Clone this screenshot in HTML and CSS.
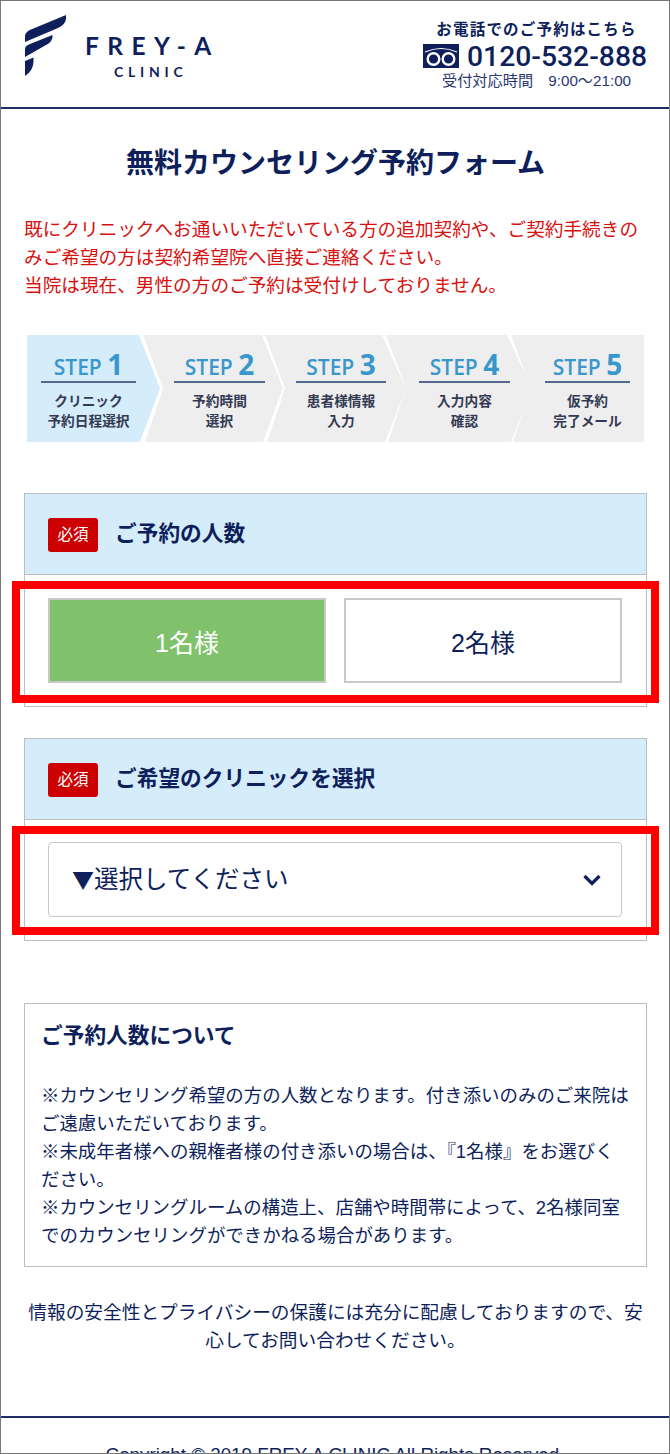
FILE: index.html
```html
<!DOCTYPE html>
<html lang="ja">
<head>
    <meta charset="UTF-8">
    <meta name="viewport" content="width=device-width, initial-scale=1.0">
    <title>無料カウンセリング予約フォーム</title>
    <link rel="stylesheet" href="styles.css">
</head>
<body>
    <div class="page">
        <header class="site-header">
            <div class="logo">
                <svg class="logo-mark" width="42" height="62" viewBox="25 15 42 62">
                    <path d="M25 42 L25 36 Q25 32 31 29.500 L66 15 L66 19 Q65 25 58 28 Z" fill="#0e1f5b"/>
                    <path d="M25 57 L25 49 Q25 46 30 44 L52.500 35 L52.500 37 Q52 42 46 45 Z" fill="#0e1f5b"/>
                    <path d="M25 61 L33.500 57.500 L33.500 62 Q33 71 25 76 Z" fill="#0e1f5b"/>
                </svg>
                <div class="logo-text">
                    <div class="logo-name">FREY-A</div>
                    <div class="logo-sub">CLINIC</div>
                </div>
            </div>
            <div class="tel">
                <div class="tel-lead">お電話でのご予約はこちら</div>
                <div class="tel-number">
                    <svg width="36" height="24" viewBox="0 0 36 24">
                        <rect width="36" height="24" fill="#0e1f5b"/>
                        <path d="M2 8 Q18 1 34 8" fill="none" stroke="#fff" stroke-width="1.200"/>
                        <circle cx="10.500" cy="15" r="5.800" fill="none" stroke="#fff" stroke-width="2.400"/>
                        <circle cx="25.500" cy="15" r="5.800" fill="none" stroke="#fff" stroke-width="2.400"/>
                    </svg>
                    <span>0120-532-888</span>
                </div>
                <div class="tel-hours">受付対応時間　9:00〜21:00</div>
            </div>
        </header>

        <main class="content">
            <h1 class="page-title">無料カウンセリング予約フォーム</h1>
            <p class="notice">既にクリニックへお通いいただいている方の追加契約や、ご契約手続きのみご希望の方は契約希望院へ直接ご連絡ください。<br>当院は現在、男性の方のご予約は受付けしておりません。</p>

            <ol class="steps">
                <li class="step step-1 active">
                    <div class="step-name">STEP <b>1</b></div>
                    <div class="step-label">クリニック<br>予約日程選択</div>
                </li>
                <li class="step step-2">
                    <div class="step-name">STEP <b>2</b></div>
                    <div class="step-label">予約時間<br>選択</div>
                </li>
                <li class="step step-3">
                    <div class="step-name">STEP <b>3</b></div>
                    <div class="step-label">患者様情報<br>入力</div>
                </li>
                <li class="step step-4">
                    <div class="step-name">STEP <b>4</b></div>
                    <div class="step-label">入力内容<br>確認</div>
                </li>
                <li class="step step-5">
                    <div class="step-name">STEP <b>5</b></div>
                    <div class="step-label">仮予約<br>完了メール</div>
                </li>
            </ol>

            <section class="field field-count">
                <div class="field-head">
                    <span class="required">必須</span>
                    <h2>ご予約の人数</h2>
                </div>
                <div class="field-body count-body">
                    <button class="count-btn selected">1名様</button>
                    <button class="count-btn">2名様</button>
                    <div class="highlight"></div>
                </div>
            </section>

            <section class="field field-clinic">
                <div class="field-head">
                    <span class="required">必須</span>
                    <h2>ご希望のクリニックを選択</h2>
                </div>
                <div class="field-body clinic-body">
                    <div class="select">
                        <span class="select-text"><span class="select-mark">▼</span>選択してください</span>
                        <svg width="20" height="14" viewBox="0 0 20 14">
                            <path d="M2.500 3 L10 10.500 L17.500 3" fill="none" stroke="#0e1f5b" stroke-width="3.200"/>
                        </svg>
                    </div>
                    <div class="highlight"></div>
                </div>
            </section>

            <section class="about">
                <h3>ご予約人数について</h3>
                <p>※カウンセリング希望の方の人数となります。付き添いのみのご来院はご遠慮いただいております。<br>※未成年者様への親権者様の付き添いの場合は、『1名様』をお選びく<br>ださい。<br>※カウンセリングルームの構造上、店舗や時間帯によって、2名様同室でのカウンセリングができかねる場合があります。</p>
            </section>

            <p class="privacy">情報の安全性とプライバシーの保護には充分に配慮しておりますので、安心してお問い合わせください。</p>
        </main>

        <footer class="site-footer">Copyright © 2019 FREY-A CLINIC All Rights Reserved.</footer>
    </div>
</body>
</html>
```

FILE: styles.css
```css
* {
    box-sizing: border-box;
}

html, body {
    margin: 0;
    height: 1454px;
    overflow: hidden;
}

body {
    font-family: "Liberation Sans", "Noto Sans CJK JP", sans-serif;
    color: #0e1f5b;
    background-color: #fff;
}

.page {
    height: 1454px;
    overflow: hidden;
    border: 1px solid #777;
}

.site-header {
    display: flex;
    justify-content: space-between;
    height: 108px;
    border-bottom: 2px solid #1f2f68;
}

.logo {
    display: flex;
    align-items: flex-start;
    padding: 14px 0 0 24px;
}

.logo-mark {
    display: block;
}

.logo-text {
    margin: 19px 0 0 18px;
    text-align: center;
}

.logo-name {
    font-family: "Lato", sans-serif;
    font-weight: 700;
    font-size: 24.500px;
    line-height: 24px;
    letter-spacing: 8.400px;
    margin-right: -8px;
}

.logo-sub {
    font-family: "Lato", sans-serif;
    font-weight: 700;
    font-size: 14px;
    line-height: 16px;
    letter-spacing: 4.800px;
    margin-top: 6px;
    margin-right: -5px;
}

.tel {
    width: 228px;
    padding: 19px 0 0 1px;
    margin-right: 19px;
    text-align: center;
}

.tel-lead {
    font-size: 15.500px;
    font-weight: 700;
    line-height: 20px;
    letter-spacing: 1.200px;
}

.tel-number {
    display: flex;
    align-items: center;
    gap: 8px;
    height: 30px;
    margin-top: 1px;
    font-family: "Roboto", sans-serif;
    font-weight: 500;
    font-size: 28.300px;
    white-space: nowrap;
}

.tel-number svg {
    flex: none;
}

.tel-hours {
    font-size: 15.200px;
    line-height: 18px;
    color: #2a3870;
    margin-top: 1px;
}

.content {
    padding: 0 22px 0 23px;
}

.page-title {
    margin: 36px 0 0;
    font-size: 28px;
    line-height: 38px;
    font-weight: 700;
    text-align: center;
}

.notice {
    margin: 33px 0 0;
    color: #d8100f;
    font-size: 18.650px;
    line-height: 28px;
}

.steps {
    display: flex;
    list-style: none;
    margin: 35px 0 0 3px;
    padding: 0;
    height: 107px;
}

.step {
    flex: none;
    height: 107px;
    background-color: #eeeeee;
    padding-top: 13px;
}

.step.active {
    background-color: #d5ecfa;
}

.step-1 {
    width: 133px;
    padding-left: 14px;
    padding-right: 24px;
    clip-path: polygon(0 0, 112px 0, 133px 50%, 113px 100%, 0 100%);
}

.step-2 {
    width: 140px;
    margin-left: -17px;
    padding-left: 31px;
    padding-right: 18px;
    clip-path: polygon(0 0, 119px 0, 140px 50%, 120px 100%, 2px 100%, 20px 50%);
}

.step-3 {
    width: 141px;
    margin-left: -18px;
    padding-left: 31px;
    padding-right: 20px;
    clip-path: polygon(0 0, 117px 0, 141px 50%, 120px 100%, 2px 100%, 20px 50%);
}

.step-4 {
    width: 146px;
    margin-left: -20px;
    padding-left: 33px;
    padding-right: 22px;
    clip-path: polygon(0 0, 121px 0, 146px 50%, 125px 100%, 2px 100%, 20px 50%);
}

.step-5 {
    width: 133px;
    margin-left: -21px;
    padding-left: 34px;
    padding-right: 14px;
    clip-path: polygon(0 0, 133px 0, 133px 100%, 2px 100%, 20px 50%);
}

.step-name {
    height: 35px;
    border-bottom: 2px solid #56688f;
    font-family: "Open Sans", sans-serif;
    font-weight: 600;
    font-size: 21px;
    line-height: 32px;
    color: #3a97cc;
    text-align: center;
    white-space: nowrap;
}

.step-name b {
    font-size: 28px;
    font-weight: 700;
}

.step-label {
    margin-top: 9px;
    font-size: 13.700px;
    font-weight: 700;
    line-height: 20px;
    color: #333a52;
    text-align: center;
    white-space: nowrap;
}

.field {
    border: 1px solid #bdbdbd;
}

.field-count {
    margin-top: 51px;
}

.field-clinic {
    margin-top: 31px;
}

.field-head {
    display: flex;
    align-items: center;
    gap: 17px;
    height: 81px;
    padding-left: 23px;
    background-color: #d5ecfa;
    border-bottom: 1px solid #bdbdbd;
}

.required {
    width: 50px;
    height: 34px;
    margin-top: 2px;
    border-radius: 3px;
    background-color: #cc0000;
    color: #fff;
    font-size: 15.500px;
    line-height: 34px;
    text-align: center;
}

.field-head h2 {
    margin: 0 0 6px;
    font-size: 21.700px;
    font-weight: 700;
}

.field-body {
    position: relative;
}

.count-body {
    display: flex;
    gap: 18px;
    padding: 23px;
}

.clinic-body {
    padding: 22px 24px 23px 23px;
}

.count-btn {
    width: 278px;
    height: 85px;
    border: 2px solid #c8c8c8;
    background-color: #fff;
    color: #0e1f5b;
    font-family: inherit;
    font-size: 25px;
    padding: 0;
}

.count-btn.selected {
    background-color: #80c26c;
    color: #fff;
}

.select {
    display: flex;
    justify-content: space-between;
    align-items: center;
    height: 75px;
    padding: 0 19px 0 23px;
    border: 1px solid #c8c8c8;
    border-radius: 4px;
    font-family: "Noto Sans CJK JP", sans-serif;
    font-size: 24.500px;
}

.select-text {
    margin-bottom: 4px;
}

.select-mark {
    font-size: 22px;
}

.highlight {
    position: absolute;
    left: -13px;
    right: -13px;
    top: 6px;
    bottom: 3px;
    border: 8px solid #ff0000;
}

.clinic-body .highlight {
    top: 6px;
    bottom: 5px;
}

.about {
    margin-top: 62px;
    height: 264px;
    padding: 17px 10px 0 16px;
    border: 1px solid #bdbdbd;
}

.about h3 {
    margin: 0;
    font-size: 21.700px;
    line-height: 30px;
    font-weight: 700;
}

.about p {
    margin: 31px 0 0;
    font-size: 18.450px;
    line-height: 28px;
}

.privacy {
    margin: 32px 4px 0;
    font-size: 18.700px;
    line-height: 28px;
    text-align: center;
}

.site-footer {
    margin-top: 61px;
    padding-top: 25px;
    border-top: 2px solid #1f2f68;
    font-size: 18.800px;
    line-height: 24px;
    text-align: center;
}
```
